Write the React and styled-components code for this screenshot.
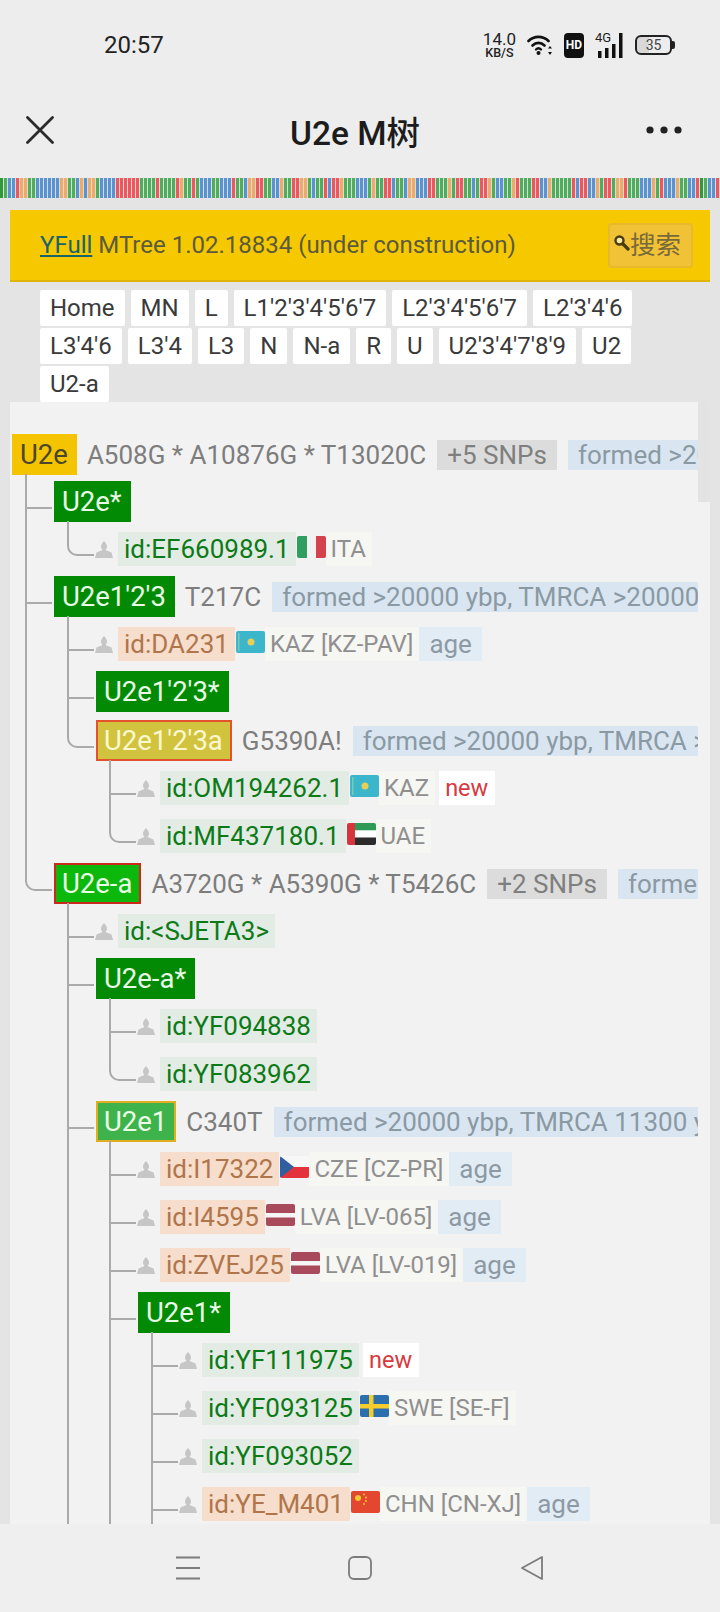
import React from 'react';
import styled, { createGlobalStyle } from 'styled-components';

const GlobalStyle = createGlobalStyle`
  * {
    box-sizing: border-box;
  }
  html, body, #root {
    margin: 0;
    padding: 0;
    height: 100%;
  }
  body {
    font-family: Roboto, "Noto Sans CJK SC", sans-serif;
    background: #e4e4e4;
  }
`;

const STRIPE_COLORS = { G: '#4fae5c', B: '#5a93d3', R: '#f2555b', O: '#f0aa66', D: '#2f9a3a' };
const STRIPE_SEQ =
  'DGBBROOGGBBBBBBOOGGBOBOOGBBBBRRRRRRGGGGRGGGGROGGRGBBBGGBBBRGGBOORRGGBBOGGRROOGBGGRBRROGGGBBBGOGGRRBGGBOOBBBRRGGGOGRRGGBGRROGBBGGORGGGRRBBOGGGGGRBRRBBOGRRGOORGGGBBBOGRBBBOGGBBR';
const stripeGradient = () => {
  const stops = [];
  for (let i = 0; i < 180; i++) {
    const x = i * 4;
    const c = STRIPE_SEQ[i % STRIPE_SEQ.length];
    stops.push(`${STRIPE_COLORS[c]} ${x}px ${x + 2.6}px`, `#d6dcd8 ${x + 2.6}px ${x + 4}px`);
  }
  return `linear-gradient(90deg, ${stops.join(', ')})`;
};

const Screen = styled.div`
  width: 720px;
  height: 1612px;
  display: flex;
  flex-direction: column;
  overflow: hidden;
  background: #e4e4e4;
`;

const StatusBar = styled.div`
  height: 88px;
  flex: none;
  display: flex;
  align-items: center;
  justify-content: space-between;
  padding: 2px 48px 0 104px;
  background: #ededed;
`;

const Clock = styled.span`
  font-size: 24px;
  color: #222;
`;

const StatusIcons = styled.div`
  display: flex;
  align-items: center;
  gap: 11px;
`;

const Speed = styled.div`
  display: flex;
  flex-direction: column;
  align-items: center;
  color: #222;
  font-size: 17px;
  font-weight: 400;
  line-height: 15px;
  small {
    font-size: 12.5px;
    line-height: 11px;
    font-weight: 500;
  }
`;

const HdBadge = styled.span`
  width: 20px;
  height: 25px;
  display: flex;
  align-items: center;
  justify-content: center;
  border-radius: 4px;
  background: #111;
  color: #fff;
  font-size: 12px;
  font-weight: 700;
`;

const Signal = styled.div`
  position: relative;
  width: 29px;
  height: 26px;
  span {
    position: absolute;
    left: 0;
    top: -2px;
    font-size: 13px;
    font-weight: 400;
    color: #222;
  }
`;

const Battery = styled.div`
  position: relative;
  width: 37px;
  height: 20px;
  border: 2px solid #222;
  border-radius: 6px;
  background: linear-gradient(90deg, #d8d8d8 0 35%, #ededed 35%);
  display: flex;
  align-items: center;
  justify-content: center;
  font-size: 14px;
  color: #444;
  &::after {
    content: '';
    position: absolute;
    right: -5px;
    top: 4px;
    width: 3px;
    height: 8px;
    border-radius: 0 2px 2px 0;
    background: #222;
  }
`;

const Header = styled.div`
  height: 90px;
  flex: none;
  display: flex;
  align-items: center;
  justify-content: space-between;
  padding: 0 38px 6px 26px;
  background: #ededed;
`;

const Title = styled.h1`
  margin: 0 0 0 10px;
  font-size: 33.5px;
  font-weight: 500;
  color: #1c1c1c;
  font-family: Roboto, "Noto Sans CJK SC", sans-serif;
`;

const Stripes = styled.div`
  height: 20px;
  flex: none;
  background: ${stripeGradient()};
`;

const Banner = styled.div`
  flex: none;
  margin: 12px 10px 0;
  height: 72px;
  padding: 0 17px 0 30px;
  display: flex;
  align-items: center;
  justify-content: space-between;
  background: #f5c800;
  border-bottom: 2px solid #dfb40c;
  font-size: 24px;
  color: #5c5a3c;
  a {
    color: #19636b;
    text-decoration: underline;
  }
`;

const SearchButton = styled.button`
  width: 85px;
  height: 45px;
  padding: 0 0 5px 3px;
  display: flex;
  align-items: center;
  background: #f1c236;
  border: 2px solid #e9b92c;
  border-radius: 4px;
  font-family: "Noto Sans CJK SC", sans-serif;
  font-size: 25.5px;
  line-height: 1;
  color: #77693a;
`;

const Crumbs = styled.nav`
  flex: none;
  display: flex;
  flex-wrap: wrap;
  gap: 2px 6px;
  padding: 8px 34px 0 40px;
`;

const Crumb = styled.span`
  height: 36px;
  padding: 0 10px;
  display: flex;
  align-items: center;
  background: #fff;
  border-radius: 2px;
  font-size: 24px;
  color: #3a3a3a;
`;

const Panel = styled.div`
  flex: 1;
  min-height: 0;
  margin: 0 10px;
  display: flex;
  background: #f2f2f2;
  overflow: hidden;
`;

const TreeArea = styled.div`
  flex: 1;
  min-width: 0;
  padding: 29px 0 0 2px;
  overflow: hidden;
  white-space: nowrap;
`;

const ScrollTrack = styled.div`
  width: 12px;
  flex: none;
`;

const ScrollThumb = styled.div`
  height: 100px;
  background: #e3e3e3;
`;

const Branch = styled.ul`
  list-style: none;
  margin: 0;
  padding: 0 0 0 42px;
`;

const Item = styled.li`
  position: relative;
  padding-top: ${(p) => (p.$drop ? '2px' : '0')};
  &::before {
    content: '';
    position: absolute;
    left: -29px;
    top: -4px;
    width: 25px;
    height: ${(p) => (p.$drop ? '35px' : '33px')};
    border-left: 2px solid #aaa;
    border-bottom: 2px solid #aaa;
    border-bottom-left-radius: ${(p) => (p.$open ? '0' : '10px')};
  }
  &:not(:last-child)::after ${(p) => (p.$open ? ', &:last-child::after' : '')} {
    content: '';
    position: absolute;
    left: -29px;
    top: 0;
    bottom: 0;
    width: 2px;
    background: #aaa;
  }
  &:not(:last-child)::before {
    border-bottom-left-radius: 0;
  }
`;

const NodeRow = styled.div`
  height: 47px;
  display: flex;
  align-items: center;
`;

const NODE_TONES = {
  root: { bg: '#f5c400', fg: '#4a4630', border: '#f5c400' },
  leaf: { bg: '#038a05', fg: '#e9fbe6', border: '#038a05' },
  hot: { bg: '#0bb80b', fg: '#eaffe6', border: '#c92a1c' },
  warm: { bg: '#d2c33f', fg: '#fbf8d0', border: '#e4522c' },
  mid: { bg: '#3fb34b', fg: '#eaffe6', border: '#e0ae1e' },
};

const Node = styled.span`
  height: 41px;
  padding: 0 7px 0 6px;
  display: inline-flex;
  align-items: center;
  flex: none;
  font-size: 27.5px;
  border: 2px solid ${(p) => NODE_TONES[p.$tone].border};
  background: ${(p) => NODE_TONES[p.$tone].bg};
  color: ${(p) => NODE_TONES[p.$tone].fg};
`;

const Mutations = styled.span`
  margin-left: 10px;
  font-size: 26px;
  color: #7d7d7d;
  flex: none;
`;

const Tag = styled.span`
  margin-left: 11px;
  height: 30px;
  padding: 0 10px;
  display: inline-flex;
  align-items: center;
  flex: none;
  font-size: 26px;
  background: ${(p) => (p.$snp ? '#dcdcdc' : '#d9e6f2')};
  color: ${(p) => (p.$snp ? '#7f7f7f' : '#8b99a3')};
`;

const LeafRow = styled.div`
  height: 48px;
  display: flex;
  align-items: center;
`;

const Person = styled.svg`
  width: 18px;
  height: 17px;
  margin: 0 5px 0 -1px;
  flex: none;
`;

const SampleId = styled.span`
  height: 34px;
  padding: 0 6px;
  display: inline-flex;
  align-items: center;
  flex: none;
  font-size: 26px;
  background: ${(p) => (p.$ancient ? '#f6ddcc' : '#e3ebe5')};
  color: ${(p) => (p.$ancient ? '#b0754a' : '#0c7a16')};
`;

const FlagBox = styled.svg`
  width: 29px;
  height: 22px;
  margin: -4px 0 0 1px;
  flex: none;
  border-radius: 2px;
`;

const Country = styled.span`
  height: 34px;
  padding: 0 6px 0 5px;
  display: inline-flex;
  align-items: center;
  flex: none;
  font-size: 24px;
  color: #8f8f8f;
  background: #f6f6f3;
`;

const NewMark = styled.span`
  margin-left: 4px;
  height: 34px;
  padding: 0 7px 0 6px;
  display: inline-flex;
  align-items: center;
  flex: none;
  font-size: 23.5px;
  color: #d8393f;
  background: #fff;
`;

const Age = styled.span`
  height: 34px;
  padding: 0 10px;
  display: inline-flex;
  align-items: center;
  flex: none;
  font-size: 26px;
  color: #8d9aa5;
  background: #e2ecf4;
`;

const NavBar = styled.div`
  height: 88px;
  flex: none;
  display: flex;
  align-items: flex-start;
  justify-content: center;
  gap: 148px;
  padding-top: 32px;
  background: #efefef;
`;

const Flag = ({ code }) => (
  <FlagBox viewBox="0 0 29 22">
    {code === 'ITA' && (
      <>
        <rect x="0" width="10" height="22" fill="#2f9e60" />
        <rect x="19" width="10" height="22" fill="#d4434d" />
      </>
    )}
    {code === 'KAZ' && (
      <>
        <rect width="29" height="22" fill="#3cb6cb" />
        <circle cx="15" cy="11" r="3.5" fill="#e4cf5a" />
        <rect x="2" y="2" width="1.5" height="18" fill="#7cc8b8" />
      </>
    )}
    {code === 'UAE' && (
      <>
        <rect x="8" width="21" height="7.5" fill="#2f9a56" />
        <rect x="8" y="7.5" width="21" height="7" fill="#fff" />
        <rect x="8" y="14.5" width="21" height="7.5" fill="#2b2b2b" />
        <rect width="8" height="22" fill="#d8343c" />
      </>
    )}
    {code === 'CZE' && (
      <>
        <rect y="11" width="29" height="11" fill="#e4323c" />
        <rect width="29" height="11" fill="#f7f7f7" />
        <path d="M0 0 L14 11 L0 22 Z" fill="#2f5f9e" />
      </>
    )}
    {code === 'LVA' && (
      <>
        <rect width="29" height="22" fill="#a84a5c" />
        <rect y="9" width="29" height="4.5" fill="#f6f6f6" />
      </>
    )}
    {code === 'SWE' && (
      <>
        <rect width="29" height="22" fill="#2c6fae" />
        <rect x="9" width="4.5" height="22" fill="#f4cc2e" />
        <rect y="9" width="29" height="4.5" fill="#f4cc2e" />
      </>
    )}
    {code === 'CHN' && (
      <>
        <rect width="29" height="22" fill="#e4472f" />
        <circle cx="7" cy="7" r="3" fill="#f3c92f" />
        <circle cx="13" cy="3.5" r="1" fill="#f3c92f" />
        <circle cx="15" cy="6.5" r="1" fill="#f3c92f" />
        <circle cx="15" cy="10" r="1" fill="#f3c92f" />
        <circle cx="13" cy="13" r="1" fill="#f3c92f" />
      </>
    )}
  </FlagBox>
);

const Leaf = ({ id, ancient, flag, place, age, fresh, open }) => (
  <Item $open={open}>
    <LeafRow>
      <Person viewBox="0 0 18 17">
        <path
          d="M9 0 C11 2 12 4 12 5.5 C12 7 11.2 8.2 10.5 9 L16.5 11.5 L18 17 L0 17 L1.5 11.5 L7.5 9 C6.8 8.2 6 7 6 5.5 C6 4 7 2 9 0 Z"
          fill="#c6c6c6"
        />
      </Person>
      <SampleId $ancient={ancient}>id:{id}</SampleId>
      {flag && <Flag code={flag} />}
      {place && <Country>{place}</Country>}
      {age && <Age>age</Age>}
      {fresh && <NewMark>new</NewMark>}
    </LeafRow>
  </Item>
);

const Formed = ({ children }) => <Tag>{children}</Tag>;

const App = () => {
  return (
    <>
      <GlobalStyle />
      <Screen>
        <StatusBar>
          <Clock>20:57</Clock>
          <StatusIcons>
            <Speed>
              14.0
              <small>KB/S</small>
            </Speed>
            <svg width="26" height="22" viewBox="0 0 26 22" fill="none" stroke="#111" strokeLinecap="round">
              <path d="M1.5 7 C7 1.5 16 1.5 21.5 7" strokeWidth="2.6" />
              <path d="M5.5 11.5 C9 8 14 8 17.5 11.5" strokeWidth="2.6" />
              <path d="M9 15.5 C10.5 14 12.5 14 14 15.5" strokeWidth="2.4" />
              <circle cx="11.5" cy="19" r="2" fill="#111" stroke="none" />
              <path d="M23 12 L25 14.5 L21 14.5 Z M23 21 L25 18 L21 18 Z" fill="#111" stroke="none" />
            </svg>
            <HdBadge>HD</HdBadge>
            <Signal>
              <span>4G</span>
              <svg width="29" height="26" viewBox="0 0 29 26" fill="#111">
                <rect x="3" y="19" width="3.5" height="7" />
                <rect x="10" y="16" width="3.5" height="10" />
                <rect x="17" y="12" width="3.5" height="14" />
                <rect x="24" y="1" width="3.5" height="25" />
              </svg>
            </Signal>
            <Battery>35</Battery>
          </StatusIcons>
        </StatusBar>

        <Header>
          <svg width="28" height="28" viewBox="0 0 28 28" stroke="#2b2b2b" strokeWidth="2.8" strokeLinecap="round">
            <path d="M1.5 1.5 L26.5 26.5 M26.5 1.5 L1.5 26.5" />
          </svg>
          <Title>U2e M树</Title>
          <svg width="36" height="8" viewBox="0 0 36 8" fill="#222">
            <circle cx="4" cy="4" r="3.6" />
            <circle cx="18" cy="4" r="3.6" />
            <circle cx="32" cy="4" r="3.6" />
          </svg>
        </Header>

        <Stripes />

        <Banner>
          <span>
            <a href="#yfull">YFull</a> MTree 1.02.18834 (under construction)
          </span>
          <SearchButton>
            <svg width="17" height="17" viewBox="0 0 17 17" fill="none" stroke="#4a3c10" strokeLinecap="round">
              <circle cx="6.5" cy="6.5" r="4" fill="#f7e9a8" strokeWidth="2.4" />
              <path d="M10 10 L15 15" strokeWidth="3.2" />
            </svg>
            搜索
          </SearchButton>
        </Banner>

        <Crumbs>
          {["Home", "MN", "L", "L1'2'3'4'5'6'7", "L2'3'4'5'6'7", "L2'3'4'6", "L3'4'6", "L3'4", "L3", "N", "N-a", "R", "U", "U2'3'4'7'8'9", "U2", "U2-a"].map((c) => (
            <Crumb key={c}>{c}</Crumb>
          ))}
        </Crumbs>

        <Panel>
          <TreeArea>
            <NodeRow>
              <Node $tone="root">U2e</Node>
              <Mutations>A508G * A10876G * T13020C</Mutations>
              <Tag $snp>+5 SNPs</Tag>
              <Formed>formed &gt;20000 ybp, TMRCA &gt;20000 ybp</Formed>
            </NodeRow>
            <Branch>
              <Item>
                <NodeRow>
                  <Node $tone="leaf">U2e*</Node>
                </NodeRow>
                <Branch>
                  <Leaf id="EF660989.1" flag="ITA" place="ITA" />
                </Branch>
              </Item>
              <Item>
                <NodeRow>
                  <Node $tone="leaf">U2e1'2'3</Node>
                  <Mutations>T217C</Mutations>
                  <Formed>formed &gt;20000 ybp, TMRCA &gt;20000 ybp</Formed>
                </NodeRow>
                <Branch>
                  <Leaf id="DA231" ancient flag="KAZ" place="KAZ [KZ-PAV]" age />
                  <Item>
                    <NodeRow>
                      <Node $tone="leaf">U2e1'2'3*</Node>
                    </NodeRow>
                  </Item>
                  <Item $drop>
                    <NodeRow>
                      <Node $tone="warm">U2e1'2'3a</Node>
                      <Mutations>G5390A!</Mutations>
                      <Formed>formed &gt;20000 ybp, TMRCA &gt;20000 ybp</Formed>
                    </NodeRow>
                    <Branch>
                      <Leaf id="OM194262.1" flag="KAZ" place="KAZ" fresh />
                      <Leaf id="MF437180.1" flag="UAE" place="UAE" />
                    </Branch>
                  </Item>
                </Branch>
              </Item>
              <Item>
                <NodeRow>
                  <Node $tone="hot">U2e-a</Node>
                  <Mutations>A3720G * A5390G * T5426C</Mutations>
                  <Tag $snp>+2 SNPs</Tag>
                  <Formed>formed &gt;20000 ybp, TMRCA &gt;20000 ybp</Formed>
                </NodeRow>
                <Branch>
                  <Leaf id="<SJETA3>" />
                  <Item>
                    <NodeRow>
                      <Node $tone="leaf">U2e-a*</Node>
                    </NodeRow>
                    <Branch>
                      <Leaf id="YF094838" />
                      <Leaf id="YF083962" />
                    </Branch>
                  </Item>
                  <Item $open>
                    <NodeRow>
                      <Node $tone="mid">U2e1</Node>
                      <Mutations>C340T</Mutations>
                      <Formed>formed &gt;20000 ybp, TMRCA 11300 ybp</Formed>
                    </NodeRow>
                    <Branch>
                      <Leaf id="I17322" ancient flag="CZE" place="CZE [CZ-PR]" age />
                      <Leaf id="I4595" ancient flag="LVA" place="LVA [LV-065]" age />
                      <Leaf id="ZVEJ25" ancient flag="LVA" place="LVA [LV-019]" age />
                      <Item $open>
                        <NodeRow>
                          <Node $tone="leaf">U2e1*</Node>
                        </NodeRow>
                        <Branch>
                          <Leaf id="YF111975" fresh />
                          <Leaf id="YF093125" flag="SWE" place="SWE [SE-F]" />
                          <Leaf id="YF093052" />
                          <Leaf id="YE_M401" ancient flag="CHN" place="CHN [CN-XJ]" age open />
                        </Branch>
                      </Item>
                    </Branch>
                  </Item>
                </Branch>
              </Item>
            </Branch>
          </TreeArea>
          <ScrollTrack>
            <ScrollThumb />
          </ScrollTrack>
        </Panel>

        <NavBar>
          <svg width="24" height="24" viewBox="0 0 24 24" stroke="#7c7c7c" strokeWidth="1.8">
            <path d="M0 1.5 H24 M0 12 H24 M0 22.5 H24" />
          </svg>
          <svg width="24" height="24" viewBox="0 0 24 24" fill="none" stroke="#7c7c7c" strokeWidth="1.8">
            <rect x="1" y="1" width="22" height="22" rx="5" />
          </svg>
          <svg width="24" height="24" viewBox="0 0 24 24" fill="none" stroke="#7c7c7c" strokeWidth="1.8" strokeLinejoin="round">
            <path d="M22 1 L2 12 L22 23 Z" />
          </svg>
        </NavBar>
      </Screen>
    </>
  );
};

export default App;
